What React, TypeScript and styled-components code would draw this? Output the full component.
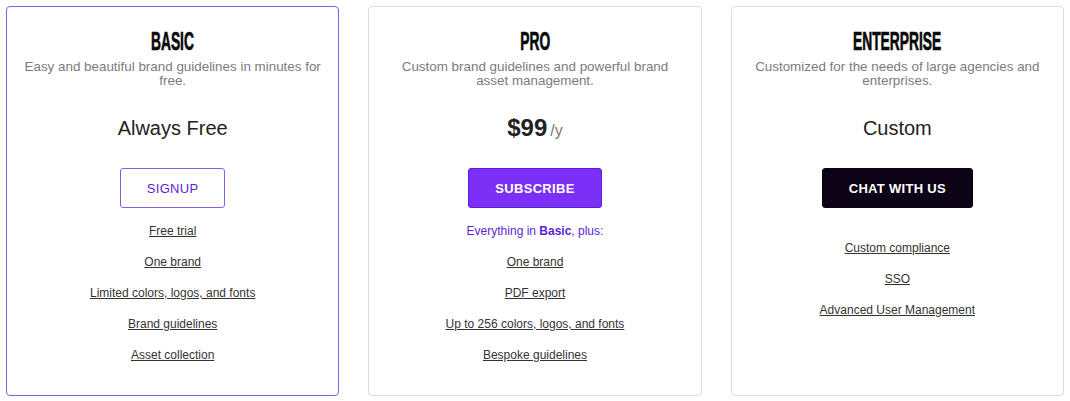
import React from "react";
import styled, { createGlobalStyle } from "styled-components";

const Global = createGlobalStyle`
  html, body { margin: 0; padding: 0; background: #fff; }
  body { font-family: "Liberation Sans", Arial, sans-serif; }
`;

const Page = styled.div`
  display: grid;
  grid-template-columns: repeat(3, 1fr);
  column-gap: 29px;
  padding: 6px 6px 5px;
`;

const Card = styled.div<{ $active?: boolean }>`
  box-sizing: border-box;
  height: 390px;
  border: 1px solid ${(p) => (p.$active ? "#8a5ce6" : "#dcdcdc")};
  border-radius: 4px;
  display: flex;
  flex-direction: column;
  align-items: center;
  padding: 21px 10px 0;
  text-align: center;
`;

const Title = styled.h2`
  margin: 0;
  height: 26px;
  line-height: 26px;
  font-family: "Liberation Sans", Arial, sans-serif;
  font-weight: 700;
  font-size: 26px;
  color: #0a0a0a;
  display: inline-block;
  transform: scaleX(0.53);
  -webkit-text-stroke: 0.7px #0a0a0a;
  white-space: nowrap;
`;

const Desc = styled.p`
  margin: 6px 0 0;
  font-size: 13.4px;
  line-height: 14px;
  color: #7b7b7b;
  max-width: 300px;
`;

const Price = styled.div`
  margin-top: 28px;
  height: 24px;
  line-height: 24px;
  font-size: 20px;
  color: #222;
  display: flex;
  align-items: baseline;
  justify-content: center;
`;

const Amount = styled.span`
  font-size: 24px;
  font-weight: 700;
  color: #222;
`;

const Per = styled.span`
  font-size: 16px;
  color: #777;
  margin-left: 3px;
`;

const Button = styled.button<{ $variant: "outline" | "primary" | "dark" }>`
  margin-top: 28px;
  box-sizing: border-box;
  height: 40px;
  padding: 0 26px;
  border-radius: 3px;
  font-family: "Liberation Sans", Arial, sans-serif;
  font-size: 13px;
  letter-spacing: ${(p) => (p.$variant === "outline" ? "0.3px" : "0.3px")};
  font-weight: ${(p) => (p.$variant === "outline" ? 400 : 700)};
  cursor: pointer;
  border: 1px solid
    ${(p) =>
      p.$variant === "outline" ? "#8a5ce6" : p.$variant === "primary" ? "#5a1fd6" : "#0c0316"};
  background: ${(p) =>
    p.$variant === "outline" ? "#fff" : p.$variant === "primary" ? "#7b2ff7" : "#0c0316"};
  color: ${(p) => (p.$variant === "outline" ? "#5b1fd6" : "#fff")};
`;

const Features = styled.ul`
  list-style: none;
  margin: 16px 0 0;
  padding: 0;
  display: flex;
  flex-direction: column;
  align-items: center;
  gap: 17px;
`;

const Note = styled.li`
  font-size: 12px;
  line-height: 14px;
  color: #5b1fd6;
  min-height: 0;
  b { font-weight: 700; }
`;

const Feature = styled.li`
  font-size: 12px;
  line-height: 14px;
`;

const FeatureLink = styled.a`
  color: #333;
  text-decoration: underline;
  text-underline-offset: 1px;
`;

type Plan = {
  name: string;
  desc: string;
  price: React.ReactNode;
  button: string;
  variant: "outline" | "primary" | "dark";
  active?: boolean;
  note?: React.ReactNode;
  emptyNote?: boolean;
  features: string[];
};

const plans: Plan[] = [
  {
    name: "BASIC",
    desc: "Easy and beautiful brand guidelines in minutes for free.",
    price: "Always Free",
    button: "SIGNUP",
    variant: "outline",
    active: true,
    features: [
      "Free trial",
      "One brand",
      "Limited colors, logos, and fonts",
      "Brand guidelines",
      "Asset collection",
    ],
  },
  {
    name: "PRO",
    desc: "Custom brand guidelines and powerful brand asset management.",
    price: (
      <>
        <Amount>$99</Amount>
        <Per>/y</Per>
      </>
    ),
    button: "SUBSCRIBE",
    variant: "primary",
    note: (
      <>
        Everything in <b>Basic</b>, plus:
      </>
    ),
    features: ["One brand", "PDF export", "Up to 256 colors, logos, and fonts", "Bespoke guidelines"],
  },
  {
    name: "ENTERPRISE",
    desc: "Customized for the needs of large agencies and enterprises.",
    price: "Custom",
    button: "CHAT WITH US",
    variant: "dark",
    emptyNote: true,
    features: ["Custom compliance", "SSO", "Advanced User Management"],
  },
];

export default function App() {
  return (
    <>
      <Global />
      <Page>
        {plans.map((p) => (
          <Card key={p.name} $active={p.active}>
            <Title>{p.name}</Title>
            <Desc>{p.desc}</Desc>
            <Price>{p.price}</Price>
            <Button $variant={p.variant}>{p.button}</Button>
            <Features>
              {p.note && <Note>{p.note}</Note>}
              {p.emptyNote && <Note />}
              {p.features.map((f) => (
                <Feature key={f}>
                  <FeatureLink href="#">{f}</FeatureLink>
                </Feature>
              ))}
            </Features>
          </Card>
        ))}
      </Page>
    </>
  );
}
